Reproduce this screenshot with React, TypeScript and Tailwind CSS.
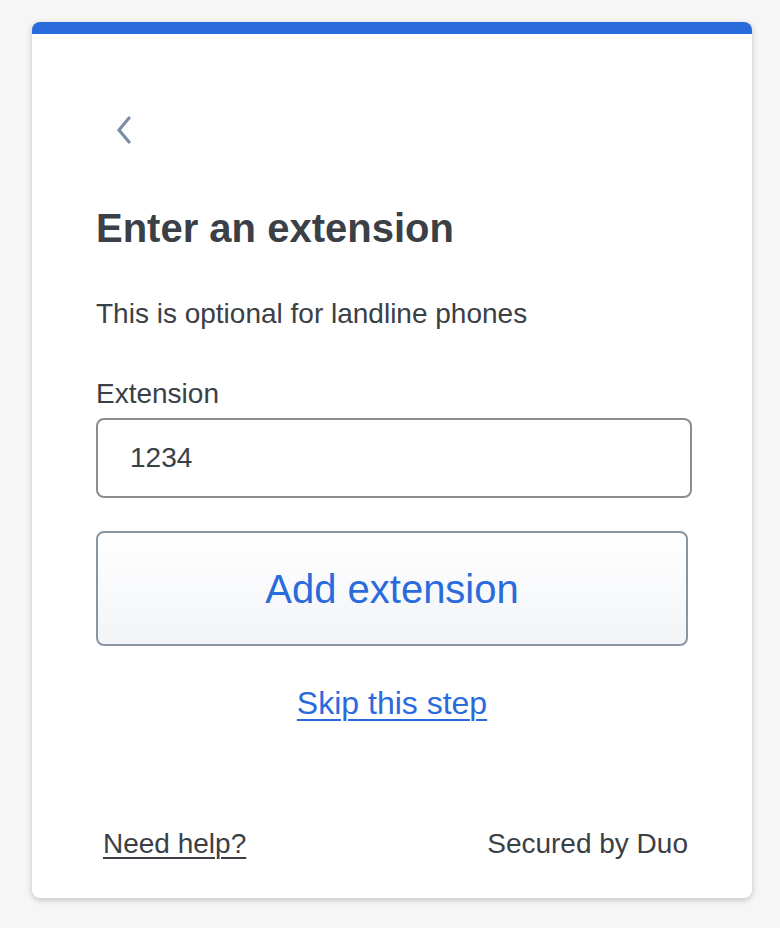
export default function App() {
  return (
    <div className="min-h-screen bg-[#f6f6f6] px-[32px] pt-[22px] font-['Liberation_Sans',Arial,sans-serif] text-[#3a4046]">
      <div className="w-[720px] overflow-hidden rounded-[8px] bg-white shadow-[0_2px_6px_rgba(0,0,0,0.22)]">
        {/* brand bar */}
        <div className="h-[12px] bg-[#2a6bdc]" />

        <div className="px-[64px] pt-[82px] pb-[34px]">
          <button className="ml-[20px] flex h-[28px] w-[18px] items-center text-[#7b8da3]" aria-label="Back">
            <svg width="16" height="28" viewBox="0 0 16 28" fill="none">
              <path d="M13 2 L3 14 L13 26" stroke="currentColor" strokeWidth="3.2" strokeLinecap="round" strokeLinejoin="round" />
            </svg>
          </button>

          <h1 className="mt-[60px] text-[40px] leading-[48px] font-bold">Enter an extension</h1>
          <p className="mt-[42px] text-[28px] leading-[40px]">This is optional for landline phones</p>

          <label className="mt-[40px] block text-[28px] leading-[40px]">Extension</label>
          <div className="mt-[4px] flex h-[80px] w-[596px] items-center rounded-[8px] border-2 border-[#8d8d8d] px-[32px] text-[28px]">
            1234
          </div>

          <button className="mt-[33px] flex h-[115px] w-[592px] items-center justify-center rounded-[8px] border-2 border-[#8a95a2] bg-gradient-to-b from-white to-[#f2f4f7] text-[40px] text-[#2a6bdc]">
            Add extension
          </button>

          <div className="mt-[37px] flex w-[592px] justify-center">
            <a href="#" className="text-[32px] leading-[40px] text-[#2a6bdc] underline decoration-2 underline-offset-[5px]">
              Skip this step
            </a>
          </div>

          <div className="mt-[101px] flex w-[592px] items-center justify-between text-[28px] leading-[40px]">
            <a href="#" className="ml-[7px] underline decoration-2 underline-offset-[4px]">Need help?</a>
            <span>Secured by Duo</span>
          </div>
        </div>
      </div>
    </div>
  );
}
